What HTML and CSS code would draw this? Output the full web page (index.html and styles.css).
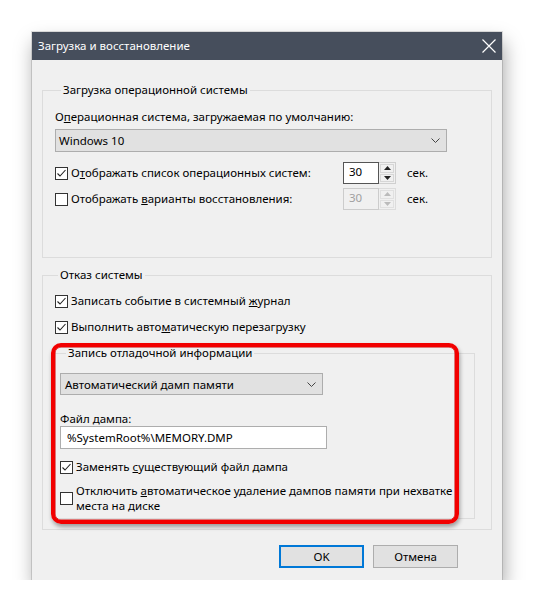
FILE: index.html
```html
<!DOCTYPE html>
<html lang="ru">
<head>
<meta charset="utf-8">
<title>Загрузка и восстановление</title>
<link rel="stylesheet" href="styles.css">
</head>
<body>
<div class="window">
  <div class="titlebar">
    <span class="title">Загрузка и восстановление</span>
    <svg class="close" width="14" height="14" viewBox="0 0 14 14"><path d="M0.5 0.5 L13.5 13.5 M13.5 0.5 L0.5 13.5" stroke="#fff" stroke-width="1.2" fill="none"/></svg>
  </div>
  <div class="body">
    <fieldset class="group g1">
      <legend>Загрузка операционной системы</legend>
      <div class="label">О<u>п</u>ерационная система, загружаемая по умолчанию:</div>
      <div class="select sel1"><span>Windows 10</span><svg class="chev" width="9" height="5" viewBox="0 0 9 5"><path d="M0.5 0.5 L4.5 4.5 L8.5 0.5" stroke="#444" fill="none"/></svg></div>
      <div class="spinrows">
        <div class="check"><span class="box"><svg width="11" height="11" viewBox="0 0 11 11"><path d="M1.5 5.5 L4 8 L9.5 2" stroke="#222" stroke-width="1.1" fill="none"/></svg></span><span>О<u>т</u>ображать список операционных систем:</span></div>
        <div class="spin"><div class="spin-val">30</div><div class="spin-btns"><div class="arr"><svg width="7" height="4" viewBox="0 0 7 4"><path d="M0 4 L3.5 0 L7 4Z" fill="#222"/></svg></div><div class="arr"><svg width="7" height="4" viewBox="0 0 7 4"><path d="M0 0 L3.5 4 L7 0Z" fill="#222"/></svg></div></div></div>
        <span class="unit">сек.</span>
        <div class="check"><span class="box"></span><span>Отображать <u>в</u>арианты восстановления:</span></div>
        <div class="spin disabled"><div class="spin-val">30</div><div class="spin-btns"><div class="arr"><svg width="7" height="4" viewBox="0 0 7 4"><path d="M0 4 L3.5 0 L7 4Z" fill="#bbb"/></svg></div><div class="arr"><svg width="7" height="4" viewBox="0 0 7 4"><path d="M0 0 L3.5 4 L7 0Z" fill="#bbb"/></svg></div></div></div>
        <span class="unit">сек.</span>
      </div>
    </fieldset>
    <fieldset class="group g2">
      <legend>Отказ системы</legend>
      <div class="check row"><span class="box"><svg width="11" height="11" viewBox="0 0 11 11"><path d="M1.5 5.5 L4 8 L9.5 2" stroke="#222" stroke-width="1.1" fill="none"/></svg></span><span>Записать событие в системный <u>ж</u>урнал</span></div>
      <div class="check row r2"><span class="box"><svg width="11" height="11" viewBox="0 0 11 11"><path d="M1.5 5.5 L4 8 L9.5 2" stroke="#222" stroke-width="1.1" fill="none"/></svg></span><span>Выполнить авто<u>м</u>атическую перезагрузку</span></div>
      <fieldset class="group g3">
        <legend>Запись отладочной информации</legend>
        <div class="select sel2"><span>Автоматический дамп памяти</span><svg class="chev" width="9" height="5" viewBox="0 0 9 5"><path d="M0.5 0.5 L4.5 4.5 L8.5 0.5" stroke="#444" fill="none"/></svg></div>
        <div class="label flabel">Файл дампа:</div>
        <div class="textbox">%SystemRoot%\MEMORY.DMP</div>
        <div class="check r3"><span class="box"><svg width="11" height="11" viewBox="0 0 11 11"><path d="M1.5 5.5 L4 8 L9.5 2" stroke="#222" stroke-width="1.1" fill="none"/></svg></span><span>Заменять <u>с</u>уществующий файл дампа</span></div>
        <div class="check r4"><span class="box"></span><span class="multi">Отключить <u>а</u>втоматическое удаление дампов памяти при нехватке места на диске</span></div>
      </fieldset>
    </fieldset>
    <div class="buttons">
      <div class="btn default">OK</div>
      <div class="btn">Отмена</div>
    </div>
  </div>
  <div class="annot"></div>
</div>
</body>
</html>
```
FILE: styles.css
```css
html, body {
  margin: 0;
  padding: 0;
  background: #ffffff;
}
body {
  font-family: "Noto Sans", "Open Sans", sans-serif;
  font-size: 11.5px;
  color: #000;
}
.window {
  position: relative;
  margin: 32px 0 0 32px;
  width: 470px;
  height: 548px;
  background: #f0f0f0;
  box-shadow: 0 0 0 1px rgba(0,0,0,0.12), 2px 10px 18px rgba(0,0,0,0.35);
  display: flex;
  flex-direction: column;
}
.titlebar {
  height: 28px;
  background: #464e5c;
  display: flex;
  align-items: center;
  justify-content: space-between;
  padding: 0 6px 0 6px;
}
.title {
  color: #fff;
  line-height: 16px;
}
.body {
  padding: 22px 10px 0 10px;
  display: flex;
  flex-direction: column;
}
.group {
  margin: 0;
  border: 1px solid #dcdcdc;
  padding: 0;
  min-width: 0;
}
.group legend {
  padding: 0 2px;
  margin-left: 6px;
  line-height: 16px;
}
.g1 {
  padding: 11px 12px 47px 12px;
}
.label {
  line-height: 16px;
}
.select {
  margin-top: 4px;
  height: 23px;
  box-sizing: border-box;
  background: #e1e1e1;
  border: 1px solid #adadad;
  display: flex;
  align-items: center;
  justify-content: space-between;
  padding: 0 6px 0 3px;
}
.sel1 {
  width: 392px;
}
.spinrows {
  margin-top: 10px;
  display: grid;
  grid-template-columns: 288px 53px auto;
  row-gap: 4px;
  align-items: center;
}
.check {
  display: flex;
  align-items: center;
  gap: 3px;
  line-height: 16px;
}
.box {
  width: 13px;
  height: 13px;
  box-sizing: border-box;
  border: 1px solid #333;
  background: #fff;
  display: flex;
  align-items: center;
  justify-content: center;
  flex: none;
}
.spin {
  display: flex;
  height: 22px;
}
.spin-val {
  width: 36px;
  box-sizing: border-box;
  border: 1px solid #555;
  background: #fff;
  padding-left: 5px;
  line-height: 18px;
}
.spin-btns {
  width: 17px;
  box-sizing: border-box;
  border: 1px solid #cfcfcf;
  border-left: none;
  display: flex;
  flex-direction: column;
  padding: 1px 1px;
  gap: 1px;
}
.arr {
  flex: 1;
  border: 1px solid #d6d6d6;
  background: #f0f0f0;
  display: flex;
  align-items: center;
  justify-content: center;
}
.spin.disabled .spin-val {
  border-color: #cccccc;
  background: #f0f0f0;
  color: #a0a0a0;
}
.spin.disabled .spin-btns {
  border-color: #dcdcdc;
}
.spin.disabled .arr {
  border-color: #e0e0e0;
}
.unit {
  line-height: 16px;
  padding-left: 11px;
}
.g2 {
  margin-top: 9px;
  padding: 10px 16px 10px 9px;
}
.row {
  margin-left: 3px;
}
.r2 {
  margin-top: 10px;
}
.g3 {
  margin-top: 10px;
  padding: 12px 7px 5px 7px;
}
.sel2 {
  margin-top: 0;
  width: 263px;
  height: 22px;
  padding-left: 4px;
}
.flabel {
  margin-top: 16px;
  line-height: 15px;
}
.textbox {
  width: 267px;
  height: 23px;
  box-sizing: border-box;
  border: 1px solid #adadad;
  background: #fff;
  padding-left: 6px;
  line-height: 21px;
}
.r3 {
  margin-top: 10px;
}
.r4 {
  margin-top: 8px;
}
.multi {
  line-height: 15px;
  width: 380px;
}
.buttons {
  margin-top: 15px;
  display: flex;
  justify-content: flex-end;
  gap: 9px;
  padding-right: 34px;
}
.btn {
  width: 85px;
  height: 23px;
  box-sizing: border-box;
  border: 1px solid #adadad;
  background: #e1e1e1;
  display: flex;
  align-items: center;
  justify-content: center;
}
.btn.default {
  border: 2px solid #0078d7;
}
.annot {
  position: absolute;
  left: 19px;
  top: 311px;
  width: 408px;
  height: 181px;
  box-sizing: border-box;
  border: 4px solid #f20000;
  border-radius: 10px;
  box-shadow: 1px 3px 4px rgba(0,0,0,0.35), inset 0 0 0 0.5px #c00;
}
```
